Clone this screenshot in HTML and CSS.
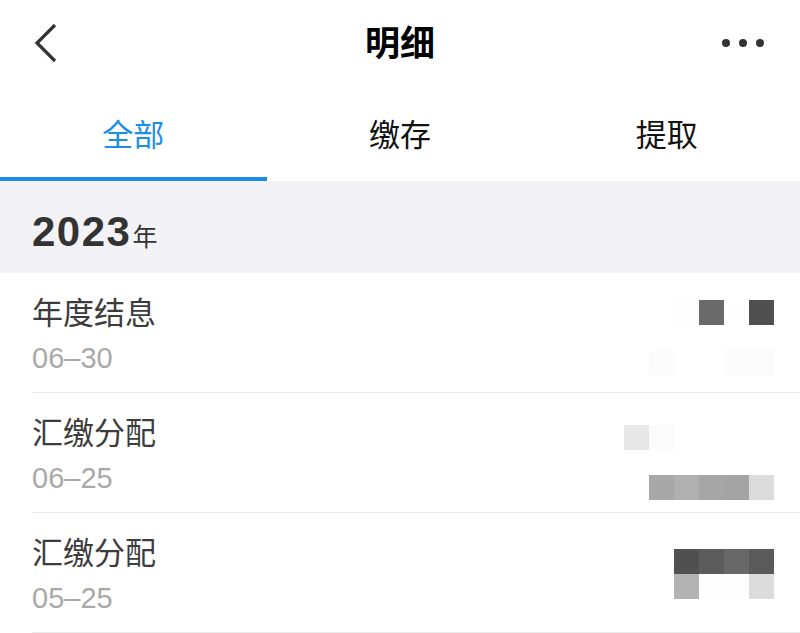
FILE: index.html
```html
<!DOCTYPE html>
<html lang="zh-CN">
<head>
<meta charset="utf-8">
<title>明细</title>
<link rel="stylesheet" href="styles.css">
</head>
<body>
<div class="page">
  <header class="navbar">
    <div class="nav-left">
      <svg class="back" width="24" height="40" viewBox="0 0 24 40"><path d="M21 2 L3 20 L21 38" fill="none" stroke="#333" stroke-width="3.2"/></svg>
    </div>
    <h1 class="title">明细</h1>
    <div class="nav-right">
      <span class="dot"></span><span class="dot"></span><span class="dot"></span>
    </div>
  </header>

  <nav class="tabs">
    <div class="tab active">全部</div>
    <div class="tab">缴存</div>
    <div class="tab">提取</div>
  </nav>

  <div class="year"><span class="year-num">2023</span><span class="year-unit">年</span></div>

  <ul class="list">
    <li class="item">
      <div class="item-title">年度结息</div>
      <div class="item-date">06–30</div>
      <div class="mosaic m1">
        <i></i><i class="c-fd"></i><i class="c-6a"></i><i class="c-fe"></i><i class="c-50"></i>
        <i></i><i></i><i></i><i></i><i></i>
        <i class="c-fc"></i><i></i><i></i><i class="c-fb"></i><i class="c-fb"></i>
      </div>
    </li>
    <li class="item">
      <div class="item-title">汇缴分配</div>
      <div class="item-date">06–25</div>
      <div class="mosaic m2">
        <i class="c-e8"></i><i class="c-fb"></i><i></i><i></i><i></i><i></i>
        <i></i><i></i><i></i><i></i><i></i><i></i>
        <i></i><i class="c-a8"></i><i class="c-b0"></i><i class="c-a6"></i><i class="c-a4"></i><i class="c-dc"></i>
      </div>
    </li>
    <li class="item">
      <div class="item-title">汇缴分配</div>
      <div class="item-date">05–25</div>
      <div class="mosaic m3">
        <i class="c-50"></i><i class="c-5c"></i><i class="c-68"></i><i class="c-5a"></i>
        <i class="c-b3"></i><i class="c-fe"></i><i class="c-fe"></i><i class="c-dc"></i>
      </div>
    </li>
  </ul>
</div>
</body>
</html>
```

FILE: styles.css
```css
* { box-sizing: border-box; }
html, body { margin: 0; padding: 0; background: #fff; }
body {
  font-family: "Liberation Sans", "Noto Sans CJK SC", sans-serif;
  color: #333;
  width: 800px;
  overflow: hidden;
}
.page { width: 800px; }

.navbar {
  height: 86px;
  display: grid;
  grid-template-columns: 1fr auto 1fr;
  align-items: center;
}
.nav-left { padding-left: 34px; display: flex; align-items: center; }
.back { display: block; }
.title {
  margin: 0;
  font-size: 35px;
  font-weight: 700;
  color: #000;
  line-height: 1;
}
.nav-right {
  display: flex;
  justify-content: flex-end;
  gap: 9px;
  padding-right: 36px;
}
.dot {
  width: 8px; height: 8px;
  border-radius: 50%;
  background: #333;
}

.tabs {
  display: grid;
  grid-template-columns: repeat(3, 1fr);
  height: 95px;
}
.tab {
  display: flex;
  align-items: center;
  justify-content: center;
  font-size: 31px;
  color: #111;
  border-bottom: 4px solid transparent;
  padding-top: 2px;
}
.tab.active {
  color: #1b8ee6;
  border-bottom-color: #1b8ee6;
}

.year {
  height: 92px;
  background: #f3f3f7;
  padding-left: 32px;
  display: flex;
  align-items: baseline;
  padding-top: 24px;
  color: #333;
}
.year-num { font-size: 42px; font-weight: 700; letter-spacing: 1.5px; line-height: 54px; }
.year-unit { font-size: 25px; margin-left: 1px; }

.list { list-style: none; margin: 0; padding: 0; }
.item {
  position: relative;
  margin-left: 32px;
  padding-top: 19px;
  padding-bottom: 12px;
  border-bottom: 1px solid #ebebeb;
}
.item-title { font-size: 31px; line-height: 44px; color: #3c3c3c; }
.item-date { font-size: 29px; line-height: 44px; color: #a9a9a9; }

.mosaic {
  position: absolute;
  right: 26px;
  display: grid;
  grid-auto-rows: 25px;
}
.mosaic i { display: block; }
.m1 { top: 27px; grid-template-columns: repeat(5, 25px); }
.m2 { top: 32px; grid-template-columns: repeat(6, 25px); }
.m3 { top: 36px; grid-template-columns: repeat(4, 25px); }

.c-50 { background: #505050; }
.c-5a { background: #5a5a5a; }
.c-5c { background: #5c5c5c; }
.c-68 { background: #686868; }
.c-6a { background: #6a6a6a; }
.c-a4 { background: #a4a4a4; }
.c-a6 { background: #a6a6a6; }
.c-a8 { background: #a8a8a8; }
.c-b0 { background: #b0b0b0; }
.c-b3 { background: #b3b3b3; }
.c-dc { background: #dcdcdc; }
.c-e8 { background: #e8e8e8; }
.c-fb { background: #fbfbfb; }
.c-fc { background: #fcfcfc; }
.c-fd { background: #fdfdfd; }
.c-fe { background: #fefefe; }
```
